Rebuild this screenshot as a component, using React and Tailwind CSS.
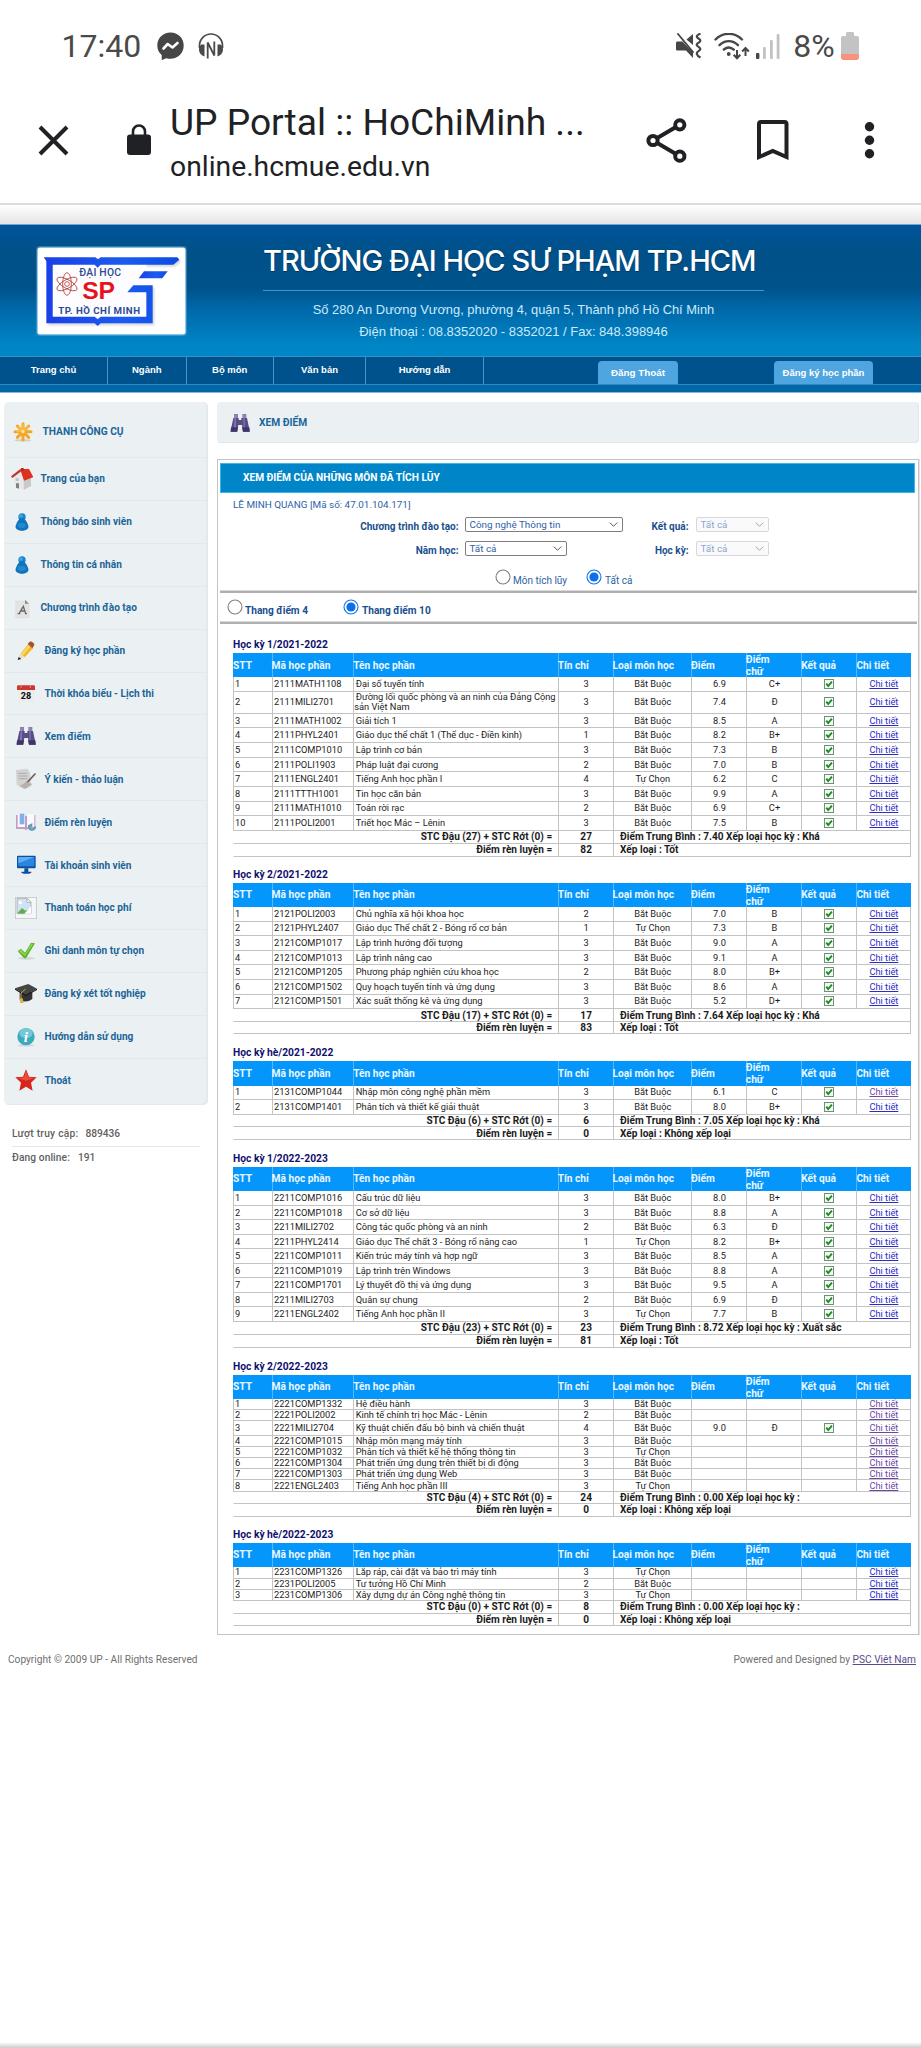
import React from "react";

const COLS = "grid-cols-[38.6px_81.6px_204.5px_54.9px_78.4px_54.9px_55.3px_55.3px_54.9px]";

/* ---------- phone status bar ---------- */

function StatusBar() {
  return (
    <div className="flex h-[92px] items-center pl-[61.500px] text-[32px] text-[#4a4a4a]">
      <span className="leading-none">17:40</span>
      <svg className="ml-[16px] h-[28px] w-[27px]" viewBox="0 0 27 28">
        <path fill="#464646" d="M13.500.5C6 .5.3 6 .3 13.400c0 4 1.600 7.200 4.400 9.500v4.300c0 .6.5.8 1 .6l3.600-1.600c1.300.4 2.700.6 4.200.6 7.500 0 13.200-5.800 13.200-13.300S21 .5 13.500.5z" />
        <path fill="none" stroke="#fff" strokeWidth="2.600" strokeLinejoin="round" strokeLinecap="round" d="M6.500 16.500l4.200-4.500 4.800 3.500 5-4.500" />
      </svg>
      <svg className="ml-[14px] h-[26px] w-[26px]" viewBox="0 0 26 26">
        <path fill="none" stroke="#4a4a4a" strokeWidth="1.700" d="M1.500 15V12.500a11.500 11.500 0 0 1 23 0V15" />
        <path fill="#4a4a4a" d="M3.500 11.500h3v12C3.500 22.500 1 20 1 16.500c0-2.200.8-4 2.500-5zM22.500 11.500h-3v12c3-1 5.500-3.500 5.500-7 0-2.200-.8-4-2.500-5z" />
        <path fill="none" stroke="#4a4a4a" strokeWidth="1.800" d="M9.700 25.500V9.500l6.600 13V8.500" />
      </svg>
      <svg className="ml-[452px] h-[26px] w-[26px]" viewBox="0 0 26 26">
        <path fill="#464646" d="M1.500 8.500h5L17 19.500V25l-7-7.500H1.500C.5 17.500 0 17 0 16v-6c0-1 .5-1.500 1.500-1.500zM10.500 6.500L17 1v11z" />
        <path fill="none" stroke="#464646" strokeWidth="1.900" strokeLinecap="round" d="M2 1l15 18" />
        <path fill="none" stroke="#464646" strokeWidth="2.200" d="M24.500.5c-4.500 2-4.500 3.500-2 5s2.500 2.800 0 4.200-2.500 2.800 0 4.200 2.500 2.800 0 4.200-2.500 4 2 6.400" />
      </svg>
      <svg className="ml-[12px] h-[27px] w-[36px]" viewBox="0 0 36 27">
        <g fill="none" stroke="#464646" strokeWidth="2.400" strokeLinecap="round">
          <path d="M1.500 6.500C9-1 20.500-1 28 6.500" />
          <path d="M5.500 12.200c5.500-5.500 13-5.500 18.500 0" />
          <path d="M9.800 16.500c3.200-2.600 7-2.600 10 .2" />
        </g>
        <circle cx="14.700" cy="21" r="1.900" fill="#464646" />
        <g fill="none" stroke="#464646" strokeWidth="2">
          <path d="M23 17v8M19.700 21.700L23 25.300l3.300-3.600" />
          <path d="M31.500 23v-7.500M28.200 18.500l3.300-3.600 3.300 3.600" />
        </g>
      </svg>
      <svg className="ml-[6px] h-[25px] w-[24px]" viewBox="0 0 24 25">
        <rect x="0" y="19" width="3.400" height="6" rx="1" fill="#464646" />
        <rect x="7" y="13" width="2.800" height="12" rx="1" fill="#c2c2c2" />
        <rect x="14" y="6" width="2.800" height="19" rx="1" fill="#c2c2c2" />
        <rect x="20.700" y="0" width="2.800" height="25" rx="1" fill="#c2c2c2" />
      </svg>
      <span className="ml-[13px] leading-none">8%</span>
      <svg className="ml-[6px] h-[28px] w-[18px]" viewBox="0 0 18 28">
        <path fill="#c3c3c3" d="M5 1.500C5 .6 5.600 0 6.500 0h5c.9 0 1.500.6 1.500 1.500V4h3c1.200 0 2 .8 2 2v16.500H0V6c0-1.200.8-2 2-2h3z" />
        <path fill="#f7937c" d="M0 22h18v3.500c0 1.500-1 2.500-2.500 2.500h-13C1 28 0 27 0 25.500z" />
      </svg>
    </div>
  );
}

/* ---------- in-app browser toolbar ---------- */

function BrowserBar() {
  return (
    <div className="flex h-[111px] items-start pl-[38px] text-[#202124]">
      <svg className="mt-[33px] h-[31px] w-[31px]" viewBox="0 0 31 31">
        <path d="M2 2l27 27M29 2L2 29" stroke="#202124" strokeWidth="4" fill="none" />
      </svg>
      <svg className="mt-[32px] ml-[58px] h-[31px] w-[24px]" viewBox="0 0 24 31">
        <rect x="0" y="10.500" width="24" height="20.500" rx="3" fill="#202124" />
        <path d="M6 12V7.500a6 6 0 0 1 12 0V12" fill="none" stroke="#202124" strokeWidth="2.600" />
      </svg>
      <div className="mt-[9px] ml-[19px] w-[476px] whitespace-nowrap">
        <div className="text-[37.150px] leading-[44px]">UP Portal :: HoChiMinh ...</div>
        <div className="mt-[4px] text-[28.300px] leading-[36px]">online.hcmue.edu.vn</div>
      </div>
      <svg className="mt-[26px] h-[46px] w-[42px]" viewBox="0 0 42 46">
        <g fill="none" stroke="#202124" strokeWidth="4">
          <path d="M33.800 6.800L7 22.500l26.800 15.700" />
          <circle cx="33.800" cy="6.800" r="4.600" fill="#fff" />
          <circle cx="7" cy="22.500" r="4.600" fill="#fff" />
          <circle cx="33.800" cy="38.200" r="4.600" fill="#fff" />
        </g>
      </svg>
      <svg className="mt-[28px] ml-[69px] h-[41px] w-[32px]" viewBox="0 0 32 41">
        <path d="M2 37V4q0-2 2-2h23.500q2 0 2 2v33L15.800 31z" fill="none" stroke="#202124" strokeWidth="4" />
      </svg>
      <svg className="mt-[29px] ml-[75px] h-[38px] w-[11px]" viewBox="0 0 11 38">
        <circle cx="5.500" cy="5.800" r="4.700" fill="#202124" />
        <circle cx="5.500" cy="19.200" r="4.700" fill="#202124" />
        <circle cx="5.500" cy="32.700" r="4.700" fill="#202124" />
      </svg>
    </div>
  );
}

/* ---------- site header ---------- */

function Logo() {
  return (
    <svg className="h-[90px] w-[151px]" viewBox="108 95 453 270">
      <defs>
        <filter id="soft" x="-10%" y="-10%" width="120%" height="120%">
          <feGaussianBlur stdDeviation="3" />
        </filter>
        <linearGradient id="bookBlue" x1="0" x2="1">
          <stop offset="0" stopColor="#1b3fe6" />
          <stop offset=".6" stopColor="#1a5cf2" />
          <stop offset="1" stopColor="#0b4be0" />
        </linearGradient>
      </defs>
      <rect x="111" y="98" width="447" height="264" rx="8" fill="#8fd0f5" filter="url(#soft)" />
      <rect x="113" y="100" width="443" height="260" rx="6" fill="#fff" />
      <g fill="#b9bcc4" opacity=".6" filter="url(#soft)" transform="translate(5 6)">
        <path d="M131 129H532l6 7-18 15H160V307H439V234H382l18-21h58V327H139V140z" />
      </g>
      <path fill="#fdfdff" d="M158 150H440V307H158z" />
      <path fill="url(#bookBlue)" d="M131 129H286l8 6 8-6H532l6 7-18 15H302l-9 9-9-9H158V307h126l9 8 9-8h137V234H382l18-21h58V327H302l-9 8-9-8H139V140z" />
      <path fill="url(#bookBlue)" d="M416 192l16-21h71l-16 21z" />
      <g fill="none" stroke="#b5473c" strokeWidth="2.600">
        <ellipse cx="201" cy="209" rx="13" ry="34" />
        <ellipse cx="201" cy="209" rx="13" ry="34" transform="rotate(60 201 209)" />
        <ellipse cx="201" cy="209" rx="13" ry="34" transform="rotate(-60 201 209)" />
        <circle cx="201" cy="209" r="7" />
      </g>
      <g fontFamily="Roboto, sans-serif" fontWeight="700">
        <text x="238" y="185" fontSize="31" fontWeight="500" textLength="125" fill="#2c4a92">ĐẠI HỌC</text>
        <text x="247" y="254" fontSize="74" fontFamily="Liberation Sans, sans-serif" textLength="98" fill="#e8121c">SP</text>
        <text x="175" y="300" fontSize="29" textLength="245" fill="#2c4a92">TP. HỒ CHÍ MINH</text>
      </g>
    </svg>
  );
}

const NAV = [
  ["Trang chủ", "w-[108px]"],
  ["Ngành", "w-[78.500px]"],
  ["Bộ môn", "w-[87.500px]"],
  ["Văn bản", "w-[92px]"],
  ["Hướng dẫn", "w-[118px]"],
];

function Header() {
  return (
    <header className="text-white">
      <div className="flex h-[132px] items-start border-t border-[#6fa9cc] bg-[linear-gradient(#00559a_0%,#005189_20%,#00528b_48%,#0067a8_63%,#0085c6_92%,#0087c8_100%)] pl-[36px]">
        <div className="mt-[21px]">
          <Logo />
        </div>
        <div className="ml-[76px] w-[501px] text-center whitespace-nowrap font-['Liberation_Sans',sans-serif]">
          <h1 className="mt-[17px] text-left font-['Inter',sans-serif] text-[29px] font-medium leading-[38px] tracking-[-0.950px] [text-shadow:0_1px_1px_#00355e]">
            TRƯỜNG ĐẠI HỌC SƯ PHẠM TP.HCM
          </h1>
          <div className="mt-[10px] h-px bg-[#3f97cf]" />
          <div className="mt-[9px] text-[12.900px] leading-[20px] text-[#cdeafa]">
            Số 280 An Dương Vương, phường 4, quận 5, Thành phố Hồ Chí Minh
          </div>
          <div className="mt-[2px] text-[13px] leading-[20px] text-[#cdeafa]">
            Điện thoại : 08.8352020 - 8352021 / Fax: 848.398946
          </div>
        </div>
      </div>
      <div className="flex h-[28px] border-t border-[#3b8fc6] bg-[#00528c] font-['Liberation_Sans',sans-serif] text-[9.500px] font-bold">
        {NAV.map(([label, w]) => (
          <div key={label} className={`flex items-center justify-center border-r border-[#4a94c8] ${w}`}>
            {label}
          </div>
        ))}
        <div className="mt-[4px] ml-[114px] flex w-[80px] items-center justify-center rounded-t-[4px] bg-[#4fa5e0] pt-px text-[9.800px]">
          Đăng Thoát
        </div>
        <div className="mt-[4px] ml-[96px] flex w-[99px] items-center justify-center rounded-t-[4px] bg-[#4fa5e0] pt-px">
          Đăng ký học phần
        </div>
      </div>
      <div className="h-[9px] border-t border-b border-t-[#2f8ac3] border-b-[#7dbadd] bg-[#0066a5]" />
    </header>
  );
}

/* ---------- sidebar icons (66 × 66 box) ---------- */

function Flower() {
  return (
    <>
      <ellipse cx="33" cy="58" rx="26" ry="4" fill="#d9cfc8" />
      <g stroke="#f2a728" strokeWidth="9" strokeLinecap="round">
        <path d="M33 8v48M9 32h48M16 15l34 34M50 15L16 49" />
      </g>
      <g stroke="#f9c34a" strokeWidth="4" strokeLinecap="round">
        <path d="M33 10v22M14 30h19M19 17l14 14M47 17L33 31" />
      </g>
      <circle cx="33" cy="32" r="5" fill="#f7e2b0" />
    </>
  );
}
function House() {
  return (
    <>
      <path fill="#e9e9e9" d="M8 28l20-16 10 22v32L11 58z" />
      <path fill="#c9c9c9" d="M38 36l22-8v26L38 66z" />
      <path fill="#c4372c" d="M0 25L27 4l4 6L4 30z" />
      <path fill="#dd2f22" d="M27 3L54 3 67 27 39 38z" />
      <path fill="#b8281e" d="M30 0h8v8h-8z" />
      <path fill="#7d8188" d="M15 46h9v16l-9-3z" />
      <path fill="#bcc8d6" d="M14 30h9v9h-9z" />
    </>
  );
}
function Person() {
  return (
    <>
      <circle cx="33" cy="18" r="11" fill="#1583cc" />
      <path fill="#0f73bd" d="M33 22c8 0 14 8 19 22 2 8-5 15-19 15S12 52 14 44c5-14 11-22 19-22z" />
      <circle cx="30" cy="15" r="6" fill="#3ba3e2" />
      <ellipse cx="32" cy="43" rx="12" ry="8" fill="#2189d0" />
    </>
  );
}
function Paper() {
  return (
    <>
      <path fill="#e3e3e3" stroke="#cfcfcf" d="M14 12h28l12 12v38H14z" />
      <path fill="#8a8a8a" d="M42 8l12 12H42z" />
      <path fill="none" stroke="#666" strokeWidth="4" d="M20 50h8M42 50h6M25 48l12-20 7 22M30 42h12" />
    </>
  );
}
function Pencil() {
  return (
    <>
      <path fill="#f2b92b" d="M16 42L40 12l15 12-26 28z" />
      <path fill="#fbd765" d="M18 42L42 14l5 4-24 30z" />
      <path fill="#a8512f" d="M38 12l6-7c4-3 15 4 14 10l-6 10z" />
      <path fill="#f1dcc0" d="M9 58l7-17 13 11z" />
      <path fill="#222" d="M8 60l3-9 8 6z" />
    </>
  );
}
function Calendar() {
  return (
    <>
      <rect x="10" y="14" width="48" height="46" rx="3" fill="#ececec" />
      <path fill="#c9372f" d="M6 14q0-4 4-4h46q4 0 4 4v10H6z" />
      <path stroke="#e98a83" strokeWidth="3" d="M18 10v8M46 10v8" />
      <text x="33" y="51" textAnchor="middle" fontSize="27" fontWeight="800" fontFamily="Roboto, sans-serif" fill="#111">28</text>
    </>
  );
}
function Binoculars() {
  return (
    <>
      <path fill="#8b7fb0" d="M15 6h12v14H15zM40 6h12v14H40z" />
      <path fill="#5a4d86" d="M13 18h16v6h8v-6h17l8 38v3H42l-3-20H28l-4 20H5v-3z" />
      <path fill="#3f356a" d="M6 46h21l-2 13H5zM39 46h22l1 13H42z" />
      <path fill="#9c90c2" d="M17 10h4v36h-6zM43 10h4v36h-4z" opacity=".6" />
    </>
  );
}
function Note() {
  return (
    <>
      <path fill="#d3d3d3" d="M3 6l34-4 8 12 4 40-22 10L5 50z" />
      <path stroke="#aaa" strokeWidth="3" d="M10 16h26M10 24h28M11 32h26" />
      <path stroke="#6d6058" strokeWidth="5" strokeLinecap="round" d="M60 18L34 46" />
      <path fill="#b9b0a8" d="M14 54l20-12 18 6-20 14z" />
    </>
  );
}
function Book() {
  return (
    <>
      <path fill="#c79acb" d="M3 12h26l4 4 4-4h24v42H38l-5 4-5-4H3z" />
      <path fill="#fafafe" d="M8 10h22v38H8zM36 10h22v38H36z" />
      <path fill="#7fb2e8" d="M14 8h14v32H14z" />
      <path fill="none" stroke="#5a9fb5" strokeWidth="6" d="M44 42a9 9 0 1 0 16 4" />
      <path fill="#5a9fb5" d="M38 44l14-8v14z" />
    </>
  );
}
function Monitor() {
  return (
    <>
      <rect x="6" y="5" width="56" height="38" rx="3" fill="#0c4f9c" />
      <rect x="10" y="9" width="48" height="28" fill="#2a86df" />
      <path fill="#5fb0f2" d="M10 9h48L10 28z" />
      <path fill="#0c4f9c" d="M28 43h12v10H28zM19 53h30q2 6-15 6t-15-6z" />
    </>
  );
}
function BrokenImage() {
  return (
    <>
      <rect x="1" y="1" width="64" height="64" fill="#f4f7f8" stroke="#bcbcbc" strokeWidth="2" />
      <path fill="#cfe3f5" stroke="#9a9a9a" strokeWidth="2" d="M6 4h30l12 12v34H6z" />
      <path fill="#fff" stroke="#9a9a9a" strokeWidth="2" d="M36 4v12h12z" />
      <path fill="#5fae4f" d="M7 49l14-16 10 8 12-4-14 13z" />
      <path fill="#fff" d="M28 50l20-22v22z" />
      <circle cx="16" cy="17" r="5" fill="#fff" />
    </>
  );
}
function Tick() {
  return (
    <>
      <ellipse cx="34" cy="55" rx="26" ry="4" fill="#cfd8d0" />
      <path fill="#5fb52a" d="M8 34l10-8 12 12L48 8l12 2-26 43q-4 4-8 0z" />
      <path fill="#8ed455" d="M12 34l6-5 12 14L49 11l5 1-24 36z" />
    </>
  );
}
function Cap() {
  return (
    <>
      <path fill="#333" d="M14 28v22q18 12 38-2V26z" />
      <path fill="#454545" d="M0 16L40 3l26 14-34 18z" />
      <path fill="#1d1d1d" d="M0 16l32 19 34-18v4L32 40 0 20z" />
      <path fill="none" stroke="#c9a445" strokeWidth="3" d="M32 18L18 30v20" />
      <path fill="#d8b04a" d="M14 46h9l3 14H16z" />
    </>
  );
}
function Info() {
  return (
    <>
      <ellipse cx="33" cy="58" rx="26" ry="4" fill="#cfd9dc" />
      <circle cx="33" cy="32" r="26" fill="#3da9bd" />
      <ellipse cx="33" cy="22" rx="20" ry="15" fill="#7fd0dc" opacity=".8" />
      <text x="33" y="48" textAnchor="middle" fontSize="46" fontWeight="700" fontStyle="italic" fontFamily="Liberation Serif, serif" fill="#fff">i</text>
    </>
  );
}
function Star() {
  return (
    <>
      <path fill="#d8261f" d="M33 1l9 22 23 2-17 16 5 24-20-12-20 12 5-24L1 25l23-2z" />
      <path fill="#f0574b" d="M33 6l7 19 18 2-25 8-24-8 18-2z" opacity=".8" />
    </>
  );
}

function Icon({ art: Art }) {
  return (
    <svg className="h-[22px] w-[22px] shrink-0" viewBox="0 0 66 66">
      <Art />
    </svg>
  );
}

const MENU = [
  ["Trang của bạn", House, false],
  ["Thông báo sinh viên", Person, false],
  ["Thông tin cá nhân", Person, false],
  ["Chương trình đào tạo", Paper, false],
  ["Đăng ký học phần", Pencil, true],
  ["Thời khóa biểu - Lịch thi", Calendar, true],
  ["Xem điểm", Binoculars, true],
  ["Ý kiến - thảo luận", Note, true],
  ["Điểm rèn luyện", Book, true],
  ["Tài khoản sinh viên", Monitor, true],
  ["Thanh toán học phí", BrokenImage, true],
  ["Ghi danh môn tự chọn", Tick, true],
  ["Đăng ký xét tốt nghiệp", Cap, true],
  ["Hướng dẫn sử dụng", Info, true],
  ["Thoát", Star, true],
];

function Sidebar() {
  return (
    <aside className="w-[204px] shrink-0">
      <nav className="h-[703px] rounded-[5px] bg-[#ebf1f3] text-[10.100px] font-bold text-[#1c6598] shadow-[inset_-2px_-1px_0_#e2eaee]">
        <div className="flex h-[56px] items-center border-b border-[#e2e9ed] pt-[4px] pl-[8px] text-[10.200px]">
          <Icon art={Flower} />
          <span className="ml-[8.500px]">THANH CÔNG CỤ</span>
        </div>
        {MENU.map(([label, art, inset], i) => (
          <div
            key={label}
            className={`flex h-[42.920px] items-center ${i < MENU.length - 1 ? "border-b border-[#e2e9ed]" : ""} ${inset ? "pl-[10.500px]" : "pl-[6.500px]"}`}
          >
            <Icon art={art} />
            <span className="ml-[8px]">{label}</span>
          </div>
        ))}
      </nav>
      <div className="mt-[15px] ml-[8px] w-[188px] text-[10.200px] font-medium text-[#5f5f5f]">
        <div className="flex h-[27px] items-center border-b border-[#e6e6e6] pt-px">
          <span className="tracking-[0.260px]">Lượt truy cập:</span>
          <span className="ml-[7px]">889436</span>
        </div>
        <div className="flex h-[22px] items-center">
          <span className="tracking-[0.100px]">Đang online:</span>
          <span className="ml-[8px]">191</span>
        </div>
      </div>
    </aside>
  );
}

/* ---------- filter form ---------- */

function Select({ value, width, disabled }) {
  return (
    <div
      className={`flex h-[15px] items-center justify-between rounded-[2px] border pr-[4px] pl-[4px] text-[9.900px] leading-none ${width} ${
        disabled ? "border-[#d6d9dc] bg-[#fafafa] text-[#8ba6cd]" : "border-[#7d7d7d] bg-white text-[#2d62a8]"
      }`}
    >
      <span>{value}</span>
      <svg className="h-[5px] w-[9px]" viewBox="0 0 9 5">
        <path d="M.8.6l3.700 3.700L8.200.6" fill="none" stroke={disabled ? "#9aa5b0" : "#555"} strokeWidth="1" />
      </svg>
    </div>
  );
}

function Radio({ on }) {
  return (
    <svg className="h-[16px] w-[16px] shrink-0" viewBox="0 0 16 16">
      <circle cx="8" cy="8" r="7" fill="#fff" stroke={on ? "#1273e6" : "#808080"} strokeWidth="1.100" />
      {on && <circle cx="8" cy="8" r="4.600" fill="#0b70ee" />}
    </svg>
  );
}

function Filters() {
  return (
    <div className="text-[#1a4f8f]">
      <div className="flex h-[23px] items-center pl-[13px] text-[9.900px] text-[#2d62a8]">
        LÊ MINH QUANG [Mã số: 47.01.104.171]
      </div>
      <div className="flex h-[18px] items-start text-[10px] font-bold">
        <span className="w-[238.500px] pt-[3px] text-right leading-[13px]">Chương trình đào tạo:</span>
        <div className="ml-[6px] font-normal"><Select value="Công nghệ Thông tin" width="w-[158px]" /></div>
        <span className="w-[66px] pt-[3px] text-right leading-[13px]">Kết quả:</span>
        <div className="ml-[7px] font-normal"><Select value="Tất cả" width="w-[73px]" disabled /></div>
      </div>
      <div className="mt-[6px] flex h-[18px] items-start text-[10px] font-bold">
        <span className="w-[238.500px] pt-[3px] text-right leading-[13px]">Năm học:</span>
        <div className="ml-[6px] font-normal"><Select value="Tất cả" width="w-[102px]" /></div>
        <span className="w-[122px] pt-[3px] text-right leading-[13px]">Học kỳ:</span>
        <div className="ml-[7px] font-normal"><Select value="Tất cả" width="w-[73px]" disabled /></div>
      </div>
      <div className="mt-[10px] flex h-[20px] items-start pl-[275px] text-[10px] text-[#2d62a8]">
        <Radio />
        <span className="ml-[2px] pt-[6px] leading-[12px]">Môn tích lũy</span>
        <span className="ml-[19px] flex"><Radio on /></span>
        <span className="ml-[3px] pt-[6px] leading-[12px]">Tất cả</span>
      </div>
      <div className="mt-px h-[3px] border-t border-[#d9d9d9] bg-[#b0b0b0]" />
      <div className="flex h-[28px] items-start pt-[6px] pl-[7px] text-[10.150px] font-bold">
        <Radio />
        <span className="ml-[2px] pt-[6px] leading-[12px]">Thang điểm 4</span>
        <span className="ml-[35px] flex"><Radio on /></span>
        <span className="ml-[3px] pt-[6px] leading-[12px]">Thang điểm 10</span>
      </div>
      <div className="h-[3px] border-t border-[#d9d9d9] bg-[#b0b0b0]" />
    </div>
  );
}

/* ---------- score tables ---------- */

const HEADERS = ["STT", "Mã học phần", "Tên học phần", "Tín chỉ", "Loại môn học", "Điểm", "Điểm chữ", "Kết quả", "Chi tiết"];
const B = "Bắt Buộc";
const C = "Tự Chọn";

const TERMS = [
  {
    title: "Học kỳ 1/2021-2022", height: 229.7, row: 14.65, sum: [12.9, 12.9],
    rows: [
      ["2111MATH1108", "Đại số tuyến tính", 3, B, "6.9", "C+"],
      ["2111MILI2701", "Đường lối quốc phòng và an ninh của Đảng Cộng sản Việt Nam", 3, B, "7.4", "Đ"],
      ["2111MATH1002", "Giải tích 1", 3, B, "8.5", "A"],
      ["2111PHYL2401", "Giáo dục thể chất 1 (Thể dục - Điền kinh)", 1, B, "8.2", "B+"],
      ["2111COMP1010", "Lập trình cơ bản", 3, B, "7.3", "B"],
      ["2111POLI1903", "Pháp luật đại cương", 2, B, "7.0", "B"],
      ["2111ENGL2401", "Tiếng Anh học phần I", 4, C, "6.2", "C"],
      ["2111TTTH1001", "Tin học căn bản", 3, B, "9.9", "A"],
      ["2111MATH1010", "Toán rời rạc", 2, B, "6.9", "C+"],
      ["2111POLI2001", "Triết học Mác – Lênin", 3, B, "7.5", "B"],
    ],
    total: ["STC Đậu (27) + STC Rớt (0) =", 27, "Điểm Trung Bình : 7.40 Xếp loại học kỳ : Khá"],
    conduct: [82, "Xếp loại : Tốt"],
  },
  {
    title: "Học kỳ 2/2021-2022", height: 178.6, row: 14.6, sum: [12.9, 12.2],
    rows: [
      ["2121POLI2003", "Chủ nghĩa xã hội khoa học", 2, B, "7.0", "B"],
      ["2121PHYL2407", "Giáo dục Thể chất 2 - Bóng rổ cơ bản", 1, C, "7.3", "B"],
      ["2121COMP1017", "Lập trình hướng đối tượng", 3, B, "9.0", "A"],
      ["2121COMP1013", "Lập trình nâng cao", 3, B, "9.1", "A"],
      ["2121COMP1205", "Phương pháp nghiên cứu khoa học", 2, B, "8.0", "B+"],
      ["2121COMP1502", "Quy hoạch tuyến tính và ứng dụng", 3, B, "8.6", "A"],
      ["2121COMP1501", "Xác suất thống kê và ứng dụng", 3, B, "5.2", "D+"],
    ],
    total: ["STC Đậu (17) + STC Rớt (0) =", 17, "Điểm Trung Bình : 7.64 Xếp loại học kỳ : Khá"],
    conduct: [83, "Xếp loại : Tốt"],
  },
  {
    title: "Học kỳ hè/2021-2022", height: 105.7, row: 14.6, sum: [12.5, 12.5],
    rows: [
      ["2131COMP1044", "Nhập môn công nghệ phần mềm", 3, B, "6.1", "C", true],
      ["2131COMP1401", "Phân tích và thiết kế giải thuật", 3, B, "8.0", "B+"],
    ],
    total: ["STC Đậu (6) + STC Rớt (0) =", 6, "Điểm Trung Bình : 7.05 Xếp loại học kỳ : Khá"],
    conduct: [0, "Xếp loại : Không xếp loại"],
  },
  {
    title: "Học kỳ 1/2022-2023", height: 207.7, row: 14.5, sum: [13, 13],
    rows: [
      ["2211COMP1016", "Cấu trúc dữ liệu", 3, B, "8.0", "B+"],
      ["2211COMP1018", "Cơ sở dữ liệu", 3, B, "8.8", "A"],
      ["2211MILI2702", "Công tác quốc phòng và an ninh", 2, B, "6.3", "Đ"],
      ["2211PHYL2414", "Giáo dục Thể chất 3 - Bóng rổ nâng cao", 1, C, "8.2", "B+"],
      ["2211COMP1011", "Kiến trúc máy tính và hợp ngữ", 3, B, "8.5", "A"],
      ["2211COMP1019", "Lập trình trên Windows", 3, B, "8.8", "A"],
      ["2211COMP1701", "Lý thuyết đồ thị và ứng dụng", 3, B, "9.5", "A"],
      ["2211MILI2703", "Quân sự chung", 2, B, "6.9", "Đ"],
      ["2211ENGL2402", "Tiếng Anh học phần II", 3, C, "7.7", "B"],
    ],
    total: ["STC Đậu (23) + STC Rớt (0) =", 23, "Điểm Trung Bình : 8.72 Xếp loại học kỳ : Xuất sắc"],
    conduct: [81, "Xếp loại : Tốt"],
  },
  {
    title: "Học kỳ 2/2022-2023", height: 168.3, row: 11.2, sum: [12.7, 12.3],
    rows: [
      ["2221COMP1332", "Hệ điều hành", 3, B, "", "", true],
      ["2221POLI2002", "Kinh tế chính trị học Mác - Lênin", 2, B, "", "", true],
      ["2221MILI2704", "Kỹ thuật chiến đấu bộ binh và chiến thuật", 4, B, "9.0", "Đ", true],
      ["2221COMP1015", "Nhập môn mạng máy tính", 3, B, "", "", true],
      ["2221COMP1032", "Phân tích và thiết kế hệ thống thông tin", 3, C, "", "", true],
      ["2221COMP1304", "Phát triển ứng dụng trên thiết bị di động", 3, B, "", "", true],
      ["2221COMP1303", "Phát triển ứng dụng Web", 3, B, "", "", true],
      ["2221ENGL2403", "Tiếng Anh học phần III", 3, C, "", "", true],
    ],
    total: ["STC Đậu (4) + STC Rớt (0) =", 24, "Điểm Trung Bình : 0.00 Xếp loại học kỳ :"],
    conduct: [0, "Xếp loại : Không xếp loại"],
  },
  {
    title: "Học kỳ hè/2022-2023", height: 105.5, row: 11.2, sum: [12.8, 12.5],
    rows: [
      ["2231COMP1326", "Lắp ráp, cài đặt và bảo trì máy tính", 3, C, "", ""],
      ["2231POLI2005", "Tư tưởng Hồ Chí Minh", 2, B, "", ""],
      ["2231COMP1306", "Xây dựng dự án Công nghệ thông tin", 3, C, "", ""],
    ],
    total: ["STC Đậu (0) + STC Rớt (0) =", 8, "Điểm Trung Bình : 0.00 Xếp loại học kỳ :"],
    conduct: [0, "Xếp loại : Không xếp loại"],
  },
];

function Check() {
  return (
    <svg className="h-[10px] w-[10px]" viewBox="0 0 10 10">
      <rect x=".5" y=".5" width="9" height="9" fill="#f4fbf3" stroke="#6f8f78" />
      <path d="M2.300 4.600L4.200 7 7.900 2.600" fill="none" stroke="#1f8a24" strokeWidth="1.900" />
    </svg>
  );
}

function Cell({ className = "", children }) {
  return <div className={`flex min-h-0 items-center border-b border-l border-[#c3c3c3] ${className}`}>{children}</div>;
}

function ScoreRow({ index, row, base }) {
  const [code, name, credits, kind, score, letter, visited] = row;
  const long = name.length > 50;
  const height = long ? 21.8 : base < 12 && score ? 14.3 : base;
  return (
    <div className={`grid grid-rows-[100%] leading-[10px] ${COLS}`} style={{ height }}>
      <Cell className="pl-px">{index + 1}</Cell>
      <Cell className="pl-[1.500px]">{code}</Cell>
      <Cell className={long ? "pl-0" : "pl-[1.500px] whitespace-nowrap"}>
        <span className={long ? "block w-[203px] indent-[1.500px]" : ""}>{name}</span>
      </Cell>
      <Cell className="justify-center pl-px">{credits}</Cell>
      <Cell className="justify-center pl-px">{kind}</Cell>
      <Cell className="justify-center pl-px">{score}</Cell>
      <Cell className="justify-center pl-px">{letter}</Cell>
      <Cell className="justify-center">{score && <Check />}</Cell>
      <Cell className={`justify-center border-r ${visited ? "text-[#6d47a5]" : "text-[#2b2bc8]"}`}>
        <span className="underline">Chi tiết</span>
      </Cell>
    </div>
  );
}

function SummaryRow({ label, value, note, height }) {
  return (
    <div
      className="grid grid-cols-[324.700px_54.900px_298.800px] grid-rows-[100%] text-[10.080px] font-bold leading-[11px] whitespace-nowrap"
      style={{ height }}
    >
      <Cell className="justify-end border-l-transparent pr-[5.500px]">{label}</Cell>
      <Cell className="justify-center pl-px">{value}</Cell>
      <Cell className="border-r pl-[6.500px]">{note}</Cell>
    </div>
  );
}

function Term({ term }) {
  return (
    <section style={{ height: term.height }}>
      <h2 className="h-[14px] text-[10.250px] font-bold leading-[12px] text-[#10106e]">{term.title}</h2>
      <div className="w-[678.400px] text-[9.270px] text-[#1c1c1c]">
        <div className={`grid h-[24.400px] bg-[#0596fb] text-[10.200px] font-bold leading-[12px] text-[#eaf6ff] ${COLS}`}>
          {HEADERS.map((h, i) => (
            <div key={h} className={`flex items-center border-l ${i ? "border-[#56b6fb]" : "border-transparent"}`}>
              <span className={`-ml-px ${h === "Điểm chữ" ? "w-[30px] pt-px" : "whitespace-nowrap"}`}>{h}</span>
            </div>
          ))}
        </div>
        {term.rows.map((row, i) => (
          <ScoreRow key={row[0]} index={i} row={row} base={term.row} />
        ))}
        <SummaryRow label={term.total[0]} value={term.total[1]} note={term.total[2]} height={term.sum[0]} />
        <SummaryRow label="Điểm rèn luyện =" value={term.conduct[0]} note={term.conduct[1]} height={term.sum[1]} />
      </div>
    </section>
  );
}

function Main() {
  return (
    <main className="ml-[9px] w-[702px] shrink-0">
      <div className="flex h-[41px] items-center rounded-[4px] bg-[#ebf1f3] pl-[12px] text-[10.200px] font-bold text-[#1c6598] shadow-[inset_-1px_-1px_0_#dde6ea]">
        <Icon art={Binoculars} />
        <span className="ml-[8px]">XEM ĐIỂM</span>
      </div>
      <div className="mt-[16px] h-[1176px] border border-[#c4c4c4] shadow-[1px_0_0_#e3e3e3]">
        <div className="mt-[3px] ml-[2px] flex h-[30px] w-[695px] items-center border border-[#3fb4e8] bg-[#0086c8] pl-[22px] text-[10.190px] font-bold text-white">
          XEM ĐIỂM CỦA NHỮNG MÔN ĐÃ TÍCH LŨY
        </div>
        <div className="ml-[2px] w-[697px] pt-px">
          <Filters />
        </div>
        <div className="mt-[15px] pl-[15px]">
          {TERMS.map((term) => (
            <Term key={term.title} term={term} />
          ))}
        </div>
      </div>
    </main>
  );
}

export default function App() {
  return (
    <div className="flex h-[2048px] w-[921px] flex-col overflow-hidden bg-white font-['Roboto',sans-serif]">
      <StatusBar />
      <BrowserBar />
      <div className="h-[2px] bg-[#dcdcdc]" />
      <div className="h-[19px] bg-gradient-to-b from-white to-[#e4e4e4]" />
      <Header />
      <div className="flex pt-[9px] pl-[4px]">
        <Sidebar />
        <Main />
      </div>
      <div className="mt-[17px] flex h-[16px] items-center justify-between pr-[5px] pl-[8px] text-[10.170px] text-[#707070]">
        <span>Copyright © 2009 UP - All Rights Reserved</span>
        <span>
          Powered and Designed by <span className="text-[#5a4a8a] underline">PSC Việt Nam</span>
        </span>
      </div>
      <div className="mt-auto h-[6px] bg-gradient-to-b from-white to-[#cccccc]" />
    </div>
  );
}
